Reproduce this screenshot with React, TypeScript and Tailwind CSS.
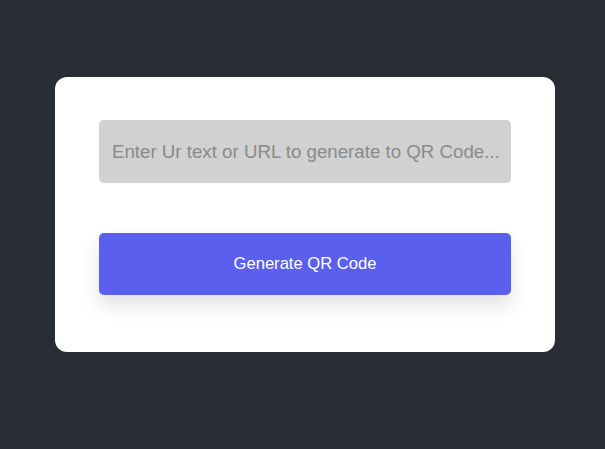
export default function App() {
  return (
    <div className="min-h-[449px] bg-[#282c34] pl-[55px] pt-[77px] font-['Liberation_Sans',Arial,sans-serif]">
      <div className="flex w-[500px] flex-col gap-[50px] rounded-[12px] bg-white px-[44px] pb-[57px] pt-[43px]">
        <input
          type="text"
          placeholder="Enter Ur text or URL to generate to QR Code..."
          className="h-[63px] w-[412px] rounded-[5px] bg-[#d1d1d1] pl-[13px] pr-[8px] text-[18.7px] text-[#333] outline-none placeholder:text-[#8a8a8a]"
        />
        <button className="h-[62px] w-[412px] rounded-[5px] bg-[#5b5fee] text-[16.6px] text-white shadow-[0_10px_20px_rgba(0,0,0,0.12)]">
          Generate QR Code
        </button>
      </div>
    </div>
  )
}
